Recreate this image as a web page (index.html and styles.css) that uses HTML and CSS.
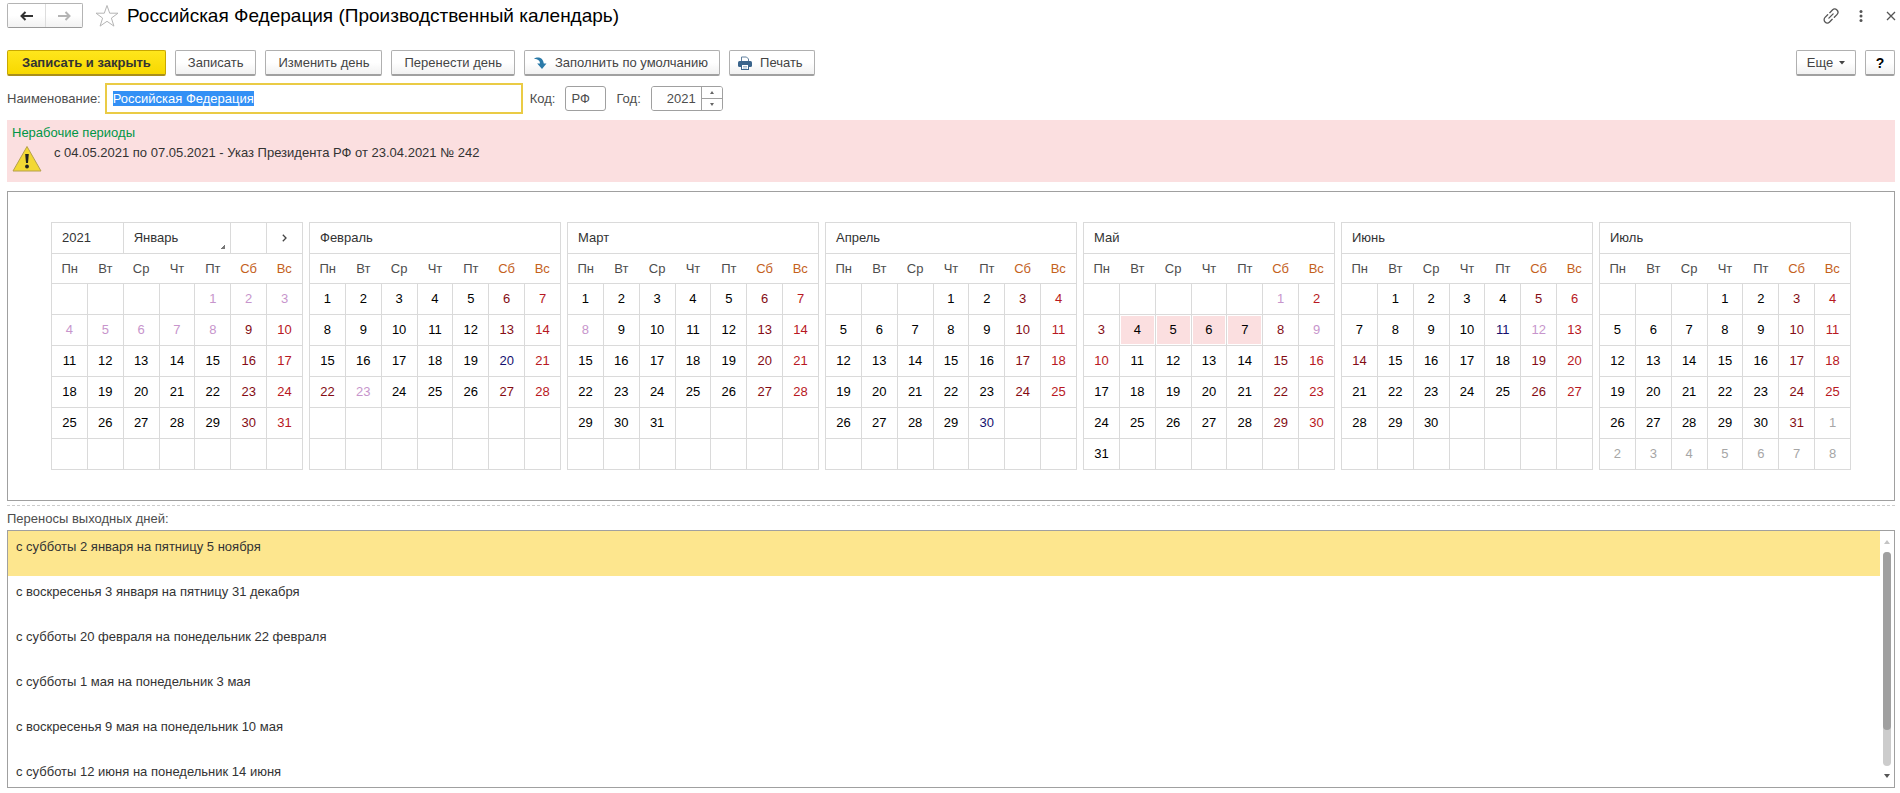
FILE: index.html
```html
<!DOCTYPE html>
<html lang="ru">
<head>
<meta charset="utf-8">
<title>Российская Федерация (Производственный календарь)</title>
<link rel="stylesheet" href="styles.css">
</head>
<body>
<header class="titlebar">
  <div class="nav">
    <button class="nav-btn" type="button" aria-label="Назад"><svg width="14" height="10" viewBox="0 0 14 10"><path d="M1 5h12M5.500 1L1.500 5l4 4" fill="none" stroke="#333" stroke-width="2"/></svg></button>
    <button class="nav-btn" type="button" aria-label="Вперед"><svg width="14" height="10" viewBox="0 0 14 10"><path d="M1 5h12M8.500 1l4 4-4 4" fill="none" stroke="#b4b4b4" stroke-width="2"/></svg></button>
  </div>
  <button class="icon-btn star" type="button" aria-label="В избранное"><svg width="24" height="24" viewBox="0 0 24 24"><path d="M12 1.500l2.700 7.700h8.300l-6.600 4.900 2.500 8L12 17.300l-6.900 4.800 2.500-8L1 9.200h8.300z" fill="#fff" stroke="#b5b5b5"/></svg></button>
  <h1 class="title">Российская Федерация (Производственный календарь)</h1>
  <div class="window-tools">
    <button class="icon-btn" type="button" aria-label="Ссылка"><svg width="16" height="16" viewBox="0 0 16 16"><g fill="none" stroke="#555" stroke-width="1.300" stroke-linecap="round" transform="rotate(-45 8 8)"><path d="M6.500 4.800H2.800a3.200 3.200 0 0 0 0 6.400h3.700M9.500 4.800h3.700a3.200 3.200 0 0 1 0 6.400H9.500M5 8h6"/></g></svg></button>
    <button class="icon-btn" type="button" aria-label="Меню"><svg width="16" height="16" viewBox="0 0 16 16"><g fill="#555"><circle cx="8" cy="3.500" r="1.500"/><circle cx="8" cy="8" r="1.500"/><circle cx="8" cy="12.500" r="1.500"/></g></svg></button>
    <button class="icon-btn" type="button" aria-label="Закрыть"><svg width="16" height="16" viewBox="0 0 16 16"><path d="M4 4l8 8M12 4l-8 8" fill="none" stroke="#555" stroke-width="1.300"/></svg></button>
  </div>
</header>

<div class="toolbar">
  <button class="btn primary" type="button">Записать и закрыть</button>
  <button class="btn" type="button">Записать</button>
  <button class="btn" type="button">Изменить день</button>
  <button class="btn" type="button">Перенести день</button>
  <button class="btn with-icon" type="button"><svg width="14" height="14" viewBox="0 0 14 14"><path d="M1 3C4 .5 10 1 10.800 7.500H13.500L9 13 4.200 7.500H7C7 4.500 4.500 2.800 1 3z" fill="#2b7aa8"/></svg><span>Заполнить по умолчанию</span></button>
  <button class="btn with-icon" type="button"><svg width="14" height="14" viewBox="0 0 14 14"><path d="M3.500 6V1h5l2 2v3" fill="#fff" stroke="#5f7f9d"/><rect x="0" y="5" width="14" height="6" rx="1.500" fill="#3b658c"/><rect x="3.500" y="8.500" width="7" height="5" fill="#fff" stroke="#3b658c"/><path d="M5 10.500h4M5 12h4" stroke="#8fa9c0" stroke-width=".8"/></svg><span>Печать</span></button>
  <button class="btn more" type="button">Еще<svg width="6" height="4" viewBox="0 0 6 4"><path d="M0 0h6L3 3.500z" fill="#444"/></svg></button>
  <button class="btn help" type="button">?</button>
</div>

<form class="fields">
  <label for="name">Наименование:</label>
  <input class="name-input" id="name" type="text" value="Российская Федерация">
  <label for="code">Код:</label>
  <input class="box-input code-input" id="code" type="text" value="РФ">
  <label for="year">Год:</label>
  <div class="spinner">
    <input class="year-input" id="year" type="number" value="2021">
    <div class="steps">
      <button type="button" aria-label="Больше"><svg width="4" height="3" viewBox="0 0 4 3"><path d="M0 3h4L2 0z" fill="#666"/></svg></button>
      <button type="button" aria-label="Меньше"><svg width="4" height="3" viewBox="0 0 4 3"><path d="M0 0h4L2 3z" fill="#666"/></svg></button>
    </div>
  </div>
</form>

<section class="notice">
  <h2 class="notice-title">Нерабочие периоды</h2>
  <div class="notice-row">
    <svg width="30" height="27" viewBox="0 0 30 27"><path d="M15 1.500L29 26H1z" fill="#f3d834" stroke="#b5a04c" stroke-linejoin="round"/><path d="M13.200 9h3.600l-.8 9h-2z" fill="#222"/><circle cx="15" cy="21.500" r="1.900" fill="#222"/></svg>
    <p class="notice-text">с 04.05.2021 по 07.05.2021 - Указ Президента РФ от 23.04.2021 № 242</p>
  </div>
</section>

<main class="calendar">
<table class="month">
<thead>
<tr><th class="name" colspan="2">2021<th class="name picker" colspan="3"><select class="month-select" aria-label="Месяц"><option>Январь</option></select><th><th class="next"><button class="icon-btn next-btn" type="button" aria-label="Следующий месяц"><svg width="5" height="8" viewBox="0 0 5 8"><path d="M.8.800L4 4 .8 7.200" fill="none" stroke="#444" stroke-width="1.300"/></svg></button></tr>
<tr class="week"><th>Пн<th>Вт<th>Ср<th>Чт<th>Пт<th>Сб<th>Вс</tr>
</thead>
<tbody>
<tr><td><td><td><td><td class="holiday">1<td class="holiday">2<td class="holiday">3</tr>
<tr><td class="holiday">4<td class="holiday">5<td class="holiday">6<td class="holiday">7<td class="holiday">8<td>9<td>10</tr>
<tr><td>11<td>12<td>13<td>14<td>15<td>16<td>17</tr>
<tr><td>18<td>19<td>20<td>21<td>22<td>23<td>24</tr>
<tr><td>25<td>26<td>27<td>28<td>29<td>30<td>31</tr>
<tr><td><td><td><td><td><td><td></tr>
</tbody>
</table>
<table class="month">
<thead>
<tr><th class="name" colspan="7">Февраль</tr>
<tr class="week"><th>Пн<th>Вт<th>Ср<th>Чт<th>Пт<th>Сб<th>Вс</tr>
</thead>
<tbody>
<tr><td>1<td>2<td>3<td>4<td>5<td>6<td>7</tr>
<tr><td>8<td>9<td>10<td>11<td>12<td>13<td>14</tr>
<tr><td>15<td>16<td>17<td>18<td>19<td class="short">20<td>21</tr>
<tr><td class="saturday">22<td class="holiday">23<td>24<td>25<td>26<td>27<td>28</tr>
<tr><td><td><td><td><td><td><td></tr>
<tr><td><td><td><td><td><td><td></tr>
</tbody>
</table>
<table class="month">
<thead>
<tr><th class="name" colspan="7">Март</tr>
<tr class="week"><th>Пн<th>Вт<th>Ср<th>Чт<th>Пт<th>Сб<th>Вс</tr>
</thead>
<tbody>
<tr><td>1<td>2<td>3<td>4<td>5<td>6<td>7</tr>
<tr><td class="holiday">8<td>9<td>10<td>11<td>12<td>13<td>14</tr>
<tr><td>15<td>16<td>17<td>18<td>19<td>20<td>21</tr>
<tr><td>22<td>23<td>24<td>25<td>26<td>27<td>28</tr>
<tr><td>29<td>30<td>31<td><td><td><td></tr>
<tr><td><td><td><td><td><td><td></tr>
</tbody>
</table>
<table class="month">
<thead>
<tr><th class="name" colspan="7">Апрель</tr>
<tr class="week"><th>Пн<th>Вт<th>Ср<th>Чт<th>Пт<th>Сб<th>Вс</tr>
</thead>
<tbody>
<tr><td><td><td><td>1<td>2<td>3<td>4</tr>
<tr><td>5<td>6<td>7<td>8<td>9<td>10<td>11</tr>
<tr><td>12<td>13<td>14<td>15<td>16<td>17<td>18</tr>
<tr><td>19<td>20<td>21<td>22<td>23<td>24<td>25</tr>
<tr><td>26<td>27<td>28<td>29<td class="short">30<td><td></tr>
<tr><td><td><td><td><td><td><td></tr>
</tbody>
</table>
<table class="month">
<thead>
<tr><th class="name" colspan="7">Май</tr>
<tr class="week"><th>Пн<th>Вт<th>Ср<th>Чт<th>Пт<th>Сб<th>Вс</tr>
</thead>
<tbody>
<tr><td><td><td><td><td><td class="holiday">1<td>2</tr>
<tr><td class="saturday">3<td class="off">4<td class="off">5<td class="off">6<td class="off">7<td>8<td class="holiday">9</tr>
<tr><td class="sunday">10<td>11<td>12<td>13<td>14<td>15<td>16</tr>
<tr><td>17<td>18<td>19<td>20<td>21<td>22<td>23</tr>
<tr><td>24<td>25<td>26<td>27<td>28<td>29<td>30</tr>
<tr><td>31<td><td><td><td><td><td></tr>
</tbody>
</table>
<table class="month">
<thead>
<tr><th class="name" colspan="7">Июнь</tr>
<tr class="week"><th>Пн<th>Вт<th>Ср<th>Чт<th>Пт<th>Сб<th>Вс</tr>
</thead>
<tbody>
<tr><td><td>1<td>2<td>3<td>4<td>5<td>6</tr>
<tr><td>7<td>8<td>9<td>10<td class="short">11<td class="holiday">12<td>13</tr>
<tr><td class="saturday">14<td>15<td>16<td>17<td>18<td>19<td>20</tr>
<tr><td>21<td>22<td>23<td>24<td>25<td>26<td>27</tr>
<tr><td>28<td>29<td>30<td><td><td><td></tr>
<tr><td><td><td><td><td><td><td></tr>
</tbody>
</table>
<table class="month">
<thead>
<tr><th class="name" colspan="7">Июль</tr>
<tr class="week"><th>Пн<th>Вт<th>Ср<th>Чт<th>Пт<th>Сб<th>Вс</tr>
</thead>
<tbody>
<tr><td><td><td><td>1<td>2<td>3<td>4</tr>
<tr><td>5<td>6<td>7<td>8<td>9<td>10<td>11</tr>
<tr><td>12<td>13<td>14<td>15<td>16<td>17<td>18</tr>
<tr><td>19<td>20<td>21<td>22<td>23<td>24<td>25</tr>
<tr><td>26<td>27<td>28<td>29<td>30<td>31<td class="other">1</tr>
<tr><td class="other">2<td class="other">3<td class="other">4<td class="other">5<td class="other">6<td class="other">7<td class="other">8</tr>
</tbody>
</table>
</main>

<section class="transfers">
  <h2 class="transfers-title">Переносы выходных дней:</h2>
  <div class="list-box">
    <ul class="list">
      <li class="selected">с субботы 2 января на пятницу 5 ноября</li>
      <li>с воскресенья 3 января на пятницу 31 декабря</li>
      <li>с субботы 20 февраля на понедельник 22 февраля</li>
      <li>с субботы 1 мая на понедельник 3 мая</li>
      <li>с воскресенья 9 мая на понедельник 10 мая</li>
      <li>с субботы 12 июня на понедельник 14 июня</li>
    </ul>
    <div class="scroll">
      <svg width="6" height="4" viewBox="0 0 6 4"><path d="M0 4h6L3 0z" fill="#c4c4c4"/></svg>
      <div class="track"><div class="thumb"></div></div>
      <svg width="6" height="4" viewBox="0 0 6 4"><path d="M0 0h6L3 4z" fill="#555"/></svg>
    </div>
  </div>
</section>
<script src="app.js"></script>
</body>
</html>
```
FILE: styles.css
```css
* { box-sizing: border-box; }

body {
  margin: 0;
  height: 100vh;
  padding: 3px 5px 5px 7px;
  display: flex;
  flex-direction: column;
  background: #fff;
  color: #333;
  font: 13px/16px "Liberation Sans", Arial, sans-serif;
}

h1, h2, p, ul { margin: 0; padding: 0; font-weight: normal; }
button, input, select { font: inherit; color: inherit; }
svg { display: block; flex: none; }

.titlebar { display: flex; align-items: center; height: 25px; }
.nav { display: flex; border: 1px solid #b4b4b4; border-bottom-color: #999; border-radius: 2px; }
.nav-btn {
  width: 37px; height: 23px; padding: 0;
  display: flex; align-items: center; justify-content: center;
  border: 0; background: linear-gradient(#fff 50%, #f2f2f2);
}
.nav-btn + .nav-btn { border-left: 1px solid #ddd; }
.icon-btn { border: 0; padding: 0; background: none; }
.star { margin: 0 8px 0 12px; }
.title { color: #000; font-size: 19px; line-height: 24px; white-space: nowrap; }
.window-tools { display: flex; gap: 14px; margin-left: auto; margin-right: -4px; }

.toolbar { display: flex; gap: 9px; margin-top: 22px; }
.btn {
  height: 26px;
  padding: 0 12px;
  display: flex; align-items: center; justify-content: center;
  border: 1px solid #b0b0b0;
  border-bottom: 2px solid #a0a0a0;
  border-radius: 2px;
  background: linear-gradient(#fff 50%, #f1f1f1);
  color: #444;
  white-space: nowrap;
}
.primary {
  padding: 0 14px;
  border-color: #c9a800 #c9a800 #a98f1c;
  background: linear-gradient(#ffe61c, #f7d800);
  color: #333;
  font-weight: bold;
}
.with-icon { padding: 0 11px 0 8px; gap: 8px; }
.more { margin-left: auto; width: 60px; gap: 6px; }
.help { width: 30px; padding: 0; color: #000; font-weight: bold; font-size: 14px; }

.fields { display: flex; align-items: center; height: 31px; margin-top: 7px; color: #4d4d4d; }
.name-input {
  width: 418px; height: 31px; margin: 0 7px 0 4px; padding: 0 6px;
  border: 2px solid #eacb45; outline: 0; color: #333;
}
.name-input::selection { background: #3390f5; color: #fff; }
.box-input, .spinner { height: 25px; border: 1px solid #a0a0a0; border-radius: 3px; background: #fff; }
.code-input { width: 41px; margin: 0 10px; padding: 0 5px; }
.spinner { display: flex; width: 72px; margin-left: 10px; overflow: hidden; }
.year-input { flex: 1; min-width: 0; border: 0; padding: 0 5px 0 0; text-align: right; outline: 0; appearance: textfield; }
.year-input::-webkit-inner-spin-button { appearance: none; margin: 0; }
.steps { display: flex; flex-direction: column; width: 21px; border-left: 1px solid #a0a0a0; }
.steps button { flex: 1; display: flex; align-items: center; justify-content: center; padding: 0; border: 0; background: #fff; }
.steps button + button { border-top: 1px solid #a0a0a0; }

.notice { height: 62px; margin-top: 6px; padding: 5px 5px 0; background: #fbdfe0; }
.notice-title { color: #009646; font-size: 13px; }
.notice-row { display: flex; gap: 12px; padding-top: 4px; }
.notice-text { color: #333; }

.calendar {
  display: grid; grid-template-columns: repeat(7, 1fr); gap: 6px;
  margin-top: 9px; padding: 30px 43px;
  border: 1px solid #a0a0a0;
}
.month { width: 100%; table-layout: fixed; border-collapse: collapse; color: #000; text-align: center; }
.month th, .month td { height: 31px; padding: 0; border: 1px solid #dadada; font-weight: normal; }
.month .week th { height: 30px; border-width: 1px 0; color: #4d4d4d; }
.month .week th:first-child { border-left-width: 1px; }
.month .week th:last-child { border-right-width: 1px; }
.month .week th:nth-child(n+6) { color: #c4611c; }
.month .name { padding-left: 10px; color: #333; text-align: left; }
.month-select {
  display: block; width: 100%; height: 29px; padding: 0;
  border: 0; outline: 0; appearance: none; color: #333;
  background: linear-gradient(135deg, transparent 50%, #777 50%) right 5px bottom 4px / 4px 4px no-repeat;
}
.next-btn { display: block; margin: 0 auto; }
.month td:nth-child(6), .month td.saturday { color: #840c14; }
.month td:nth-child(7), .month td.sunday { color: #b81822; }
.month td.holiday { color: #c795cc; }
.month td.short { color: #15106e; }
.month td.other { color: #a6a6a6; }
.month td.off { background: #fbdfe0; box-shadow: inset 0 0 0 1px #fff; }

.transfers { flex: 1; min-height: 0; display: flex; flex-direction: column; margin-top: 4px; padding-top: 5px; border-top: 1px dashed #ccc; }
.transfers-title { color: #4d4d4d; font-size: 13px; line-height: 16px; }
.list-box { flex: 1; min-height: 0; display: flex; margin-top: 3px; border: 1px solid #a0a0a0; overflow: hidden; }
.list { flex: 1; list-style: none; }
.list li { height: 45px; padding: 8px; }
.list .selected { background: #fde68e; }
.scroll { width: 14px; display: flex; flex-direction: column; align-items: center; gap: 8px; padding: 9px 0; }
.track { flex: 1; width: 8px; border-radius: 4px; background: #ccc; }
.thumb { height: 83%; border-radius: 4px; background: #a0a0a0; }
```
FILE: app.js
```js
const nameInput = document.getElementById("name");
nameInput.focus();
nameInput.select();
```
